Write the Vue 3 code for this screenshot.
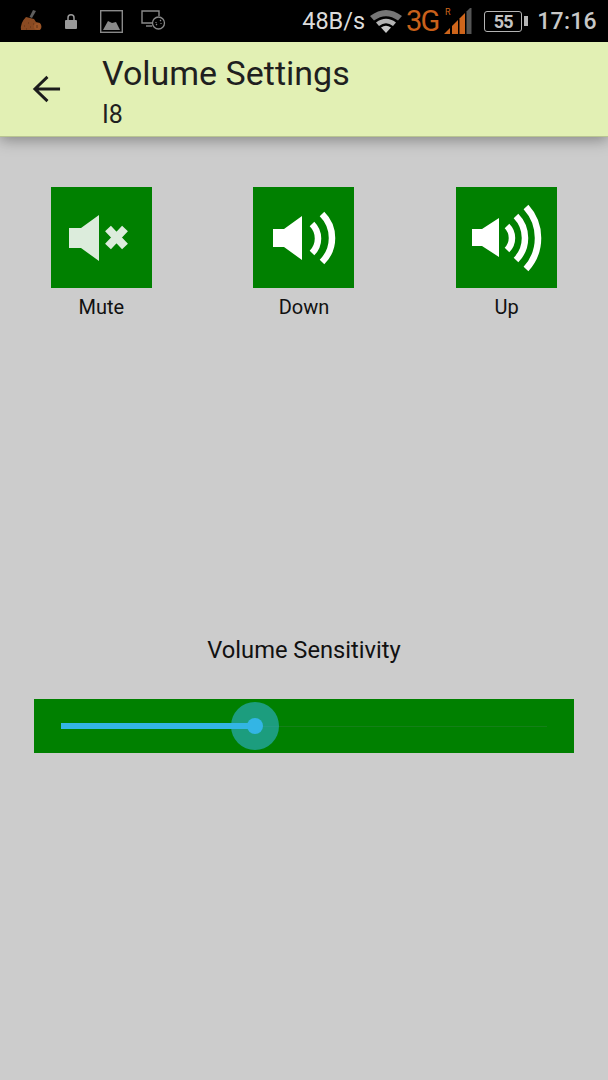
<script setup>
const buttons = [
  {
    label: 'Mute',
    speaker: 'M18 41 H30 L48 28 V74 L30 61 H18 Z',
    arcs: []
  },
  {
    label: 'Down',
    speaker: 'M20 42 H31 L49 29 V73 L31 60 H20 Z',
    arcs: ['M59 37 A20.5 20.5 0 0 1 59 66', 'M69 27 A33.8 33.8 0 0 1 69 75']
  },
  {
    label: 'Up',
    speaker: 'M16 42 H26 L43 31 V70 L26 59 H16 Z',
    arcs: ['M51 39 A17 17 0 0 1 51 63', 'M60 29 A31.4 31.4 0 0 1 60 73', 'M70 20 A46 46 0 0 1 70 82']
  }
]
const progress = 39.9
</script>

<template>
  <div class="screen">
    <div class="status">
      <div class="status-left">
        <svg class="ic-broom" width="24" height="24" viewBox="0 0 24 24">
          <path d="M14 1 L17 2 L13 9 L10.5 8 Z" fill="#5e5e5e" />
          <path d="M7 8 L15 10 L17 13 L21 14 Q24 18 21 21 L2 21 Q1 14 7 8 Z" fill="#8a4a22" />
          <circle cx="18.5" cy="17.5" r="3.5" fill="#9c5527" />
          <path d="M5 17 h1 M9 14 h1 M11 18 h1 M7 20 h1 M14 15 h1 M18 16 v3" stroke="#5f3216" stroke-width="1" />
        </svg>
        <svg class="ic-lock" width="12" height="15" viewBox="0 0 12 15">
          <path d="M3 6 V3.8 a3 3 0 0 1 6 0 V6" fill="none" stroke="#9a9a9a" stroke-width="1.5" />
          <rect x="0" y="6" width="12" height="9" rx="1" fill="#9a9a9a" />
        </svg>
        <svg class="ic-image" width="23" height="23" viewBox="0 0 23 23">
          <rect x="0.7" y="0.7" width="21.6" height="21.6" fill="none" stroke="#8a8a8a" stroke-width="1.4" />
          <path d="M3 20 L8 11 L12 13 L16 12 L20 20 Z" fill="#8a8a8a" />
        </svg>
        <svg class="ic-cast" width="25" height="22" viewBox="0 0 25 22">
          <path d="M13 13 H1 V1 H18 V6" fill="none" stroke="#8a8a8a" stroke-width="1.4" />
          <path d="M5 16 H11" stroke="#8a8a8a" stroke-width="1.4" />
          <circle cx="17.5" cy="13" r="6" fill="#000" stroke="#8a8a8a" stroke-width="1.3" />
          <path d="M15 15 l1-1 M19 11 l1-1 M15 12 v1 M20 13 v1" stroke="#8a8a8a" stroke-width="1.1" />
        </svg>
      </div>
      <div class="status-right">
        <span class="speed">48B/s</span>
        <svg class="ic-wifi" width="32" height="24" viewBox="0 0 32 24">
          <path d="M0 7 Q16 -5 32 7 L28 11.5 Q16 3 4 11.5 Z" fill="#767676" />
          <path d="M6 13.5 Q16 6 26 13.5 L23 17 Q16 11.5 9 17 Z" fill="#b4b4b4" />
          <path d="M11 18.5 Q16 15 21 18.5 L16 24 Z" fill="#c8c8c8" />
        </svg>
        <span class="net">3G</span>
        <svg class="ic-signal" width="28" height="26" viewBox="0 0 28 26">
          <text x="1" y="7" class="roam">R</text>
          <path d="M0 26 L6 20 V26 Z" fill="#d0661c" />
          <path d="M8 18 L14 12 V26 H8 Z" fill="#d0661c" />
          <path d="M15.5 10.5 L21 5 V26 H15.5 Z" fill="#d0661c" />
          <path d="M22.5 3.5 L26 0 H27.5 V26 H22.5 Z" fill="#555" />
        </svg>
        <div class="battery">
          <span>55</span>
        </div>
        <span class="clock">17:16</span>
      </div>
    </div>

    <header class="appbar">
      <svg class="back" width="30" height="30" viewBox="0 0 30 30">
        <path d="M29 15 H3 M16 2.5 L3 15 L16 27.5" fill="none" stroke="#1c1c1c" stroke-width="3" />
      </svg>
      <div class="titles">
        <div class="title">Volume Settings</div>
        <div class="subtitle">I8</div>
      </div>
    </header>

    <main class="content">
      <div class="buttons">
        <div v-for="b in buttons" :key="b.label" class="vol-btn">
          <div class="tile">
            <svg width="101" height="101" viewBox="0 0 101 101" :class="{ muted: b.label === 'Mute' }">
              <path :d="b.speaker" fill="currentColor" />
              <path
                v-if="b.label === 'Mute'"
                d="M57 41.5 L74 59.5 M74 41.5 L57 59.5"
                stroke="currentColor"
                stroke-width="8"
                fill="none"
              />
              <path
                v-for="arc in b.arcs"
                :key="arc"
                :d="arc"
                fill="none"
                stroke="currentColor"
                stroke-width="6.5"
              />
            </svg>
          </div>
          <div class="btn-label">{{ b.label }}</div>
        </div>
      </div>

      <div class="sens-label">Volume Sensitivity</div>
      <div class="slider">
        <div class="track">
          <div class="halo" :style="{ left: progress + '%' }"></div>
          <div class="fill" :style="{ width: progress + '%' }"></div>
          <div class="thumb" :style="{ left: progress + '%' }"></div>
        </div>
      </div>
    </main>
  </div>
</template>

<style scoped>
.screen {
  width: 608px;
  height: 1080px;
  background: #cccccc;
  font-family: Roboto, "Liberation Sans", sans-serif;
  overflow: hidden;
  display: flex;
  flex-direction: column;
}
.status {
  height: 42px;
  background: #000;
  display: flex;
  justify-content: space-between;
  align-items: center;
  flex: none;
}
.status-left {
  display: flex;
  align-items: center;
  padding-left: 19px;
}
.ic-lock {
  margin-left: 22px;
}
.ic-image {
  margin-left: 23px;
}
.ic-cast {
  margin-left: 18px;
}
.status-right {
  display: flex;
  align-items: center;
  padding-right: 11px;
}
.speed {
  font-size: 23.5px;
  color: #dcdcdc;
  margin-right: 5px;
}
.net {
  font-size: 29px;
  color: #c9601b;
  margin-left: 4px;
  letter-spacing: -2px;
}
.ic-signal {
  margin-left: 6px;
}
.roam {
  font-size: 9px;
  fill: #d0661c;
  font-family: Roboto, sans-serif;
}
.battery {
  width: 38px;
  height: 21px;
  margin-left: 12px;
  border: 1.5px solid #b5b5b5;
  border-radius: 3px;
  box-sizing: border-box;
  display: flex;
  align-items: center;
  justify-content: center;
  position: relative;
  font-size: 18px;
  font-weight: 700;
  letter-spacing: -1px;
  color: #c4c4c4;
}
.battery::after {
  content: '';
  position: absolute;
  right: -7px;
  top: 4px;
  width: 4px;
  height: 10px;
  background: #b5b5b5;
}
.clock {
  font-size: 23px;
  font-weight: 500;
  color: #c8c8c8;
  margin-left: 15px;
  letter-spacing: 0.3px;
}
.appbar {
  height: 95px;
  flex: none;
  background: #e2f0b4;
  border-bottom: 1px solid #b9c592;
  box-sizing: border-box;
  display: flex;
  align-items: center;
  padding-left: 32px;
  box-shadow: 0 3px 14px rgba(0, 0, 0, 0.35);
  position: relative;
}
.back {
  flex: none;
  width: 29px;
}
.titles {
  margin-left: 41px;
  padding-top: 6px;
  color: #1f1f1f;
}
.title {
  font-size: 34px;
  line-height: 38px;
}
.subtitle {
  font-size: 25px;
  line-height: 30px;
  margin-top: 8px;
}
.content {
  flex: 1;
  display: flex;
  flex-direction: column;
}
.buttons {
  display: grid;
  grid-template-columns: repeat(3, 1fr);
  padding-top: 50px;
}
.vol-btn {
  display: flex;
  flex-direction: column;
  align-items: center;
}
.tile {
  width: 101px;
  height: 101px;
  background: #008000;
  color: #fff;
}
.tile svg {
  display: block;
}
.tile svg.muted {
  color: #dcecdc;
}
.btn-label {
  font-size: 20px;
  line-height: 24px;
  margin-top: 7px;
  color: #111;
}
.sens-label {
  margin-top: 317px;
  text-align: center;
  font-size: 23.7px;
  line-height: 28px;
  color: #111;
}
.slider {
  margin: 35px 34px 0;
  height: 54px;
  background: #008000;
  display: flex;
  align-items: center;
  padding: 0 27px;
}
.track {
  flex: 1;
  height: 1px;
  background: #148018;
  position: relative;
}
.fill {
  position: absolute;
  left: 0;
  top: -3px;
  height: 6px;
  background: #33b5e5;
}
.halo {
  position: absolute;
  margin-left: -24px;
  top: -24px;
  width: 48px;
  height: 48px;
  border-radius: 50%;
  background: rgba(51, 181, 229, 0.55);
}
.thumb {
  position: absolute;
  margin-left: -8px;
  top: -8px;
  width: 16px;
  height: 16px;
  border-radius: 50%;
  background: #33b5e5;
}
</style>
